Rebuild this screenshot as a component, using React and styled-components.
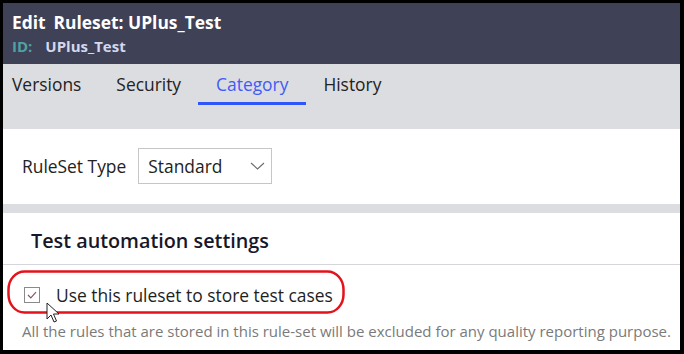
import React from "react";
import styled, { createGlobalStyle } from "styled-components";

const GlobalStyle = createGlobalStyle`
  html, body {
    margin: 0;
    padding: 0;
    background: #000;
  }
  body {
    font-family: "Open Sans", "Liberation Sans", sans-serif;
  }
`;

const Frame = styled.div`
  margin: 3px 4px 4px 3px;
  height: 347px;
  background: #fff;
  display: flex;
  flex-direction: column;
  overflow: hidden;
`;

const Header = styled.header`
  background: #3f4156;
  height: 61px;
  box-sizing: border-box;
  padding: 8px 0 0 9px;
  display: flex;
  flex-direction: column;
`;

const Title = styled.h1`
  margin: 0;
  font-size: 17.4px;
  line-height: 22px;
  font-weight: 700;
  color: #fff;
  display: flex;
  gap: 8px;
`;

const IdLine = styled.div`
  margin-top: 4px;
  font-size: 15px;
  line-height: 18px;
  font-weight: 700;
  display: flex;
  gap: 13px;

  .label {
    color: #4fa2a4;
  }
  .value {
    color: #d3d8ee;
  }
`;

const TabBar = styled.nav`
  background: #dcdde1;
  height: 65px;
  box-sizing: border-box;
  padding: 8px 0 0 9px;
  display: flex;
  align-items: flex-start;
  gap: 35px;
`;

const Tab = styled.div`
  position: relative;
  font-size: 17.4px;
  line-height: 24px;
  padding-bottom: 9px;
  color: ${({ $active }) => ($active ? "#3f5cf5" : "#222")};

  &::after {
    content: "";
    display: ${({ $active }) => ($active ? "block" : "none")};
    position: absolute;
    left: -18px;
    right: -18px;
    bottom: 0;
    height: 3px;
    background: #2d55f7;
  }
`;

const TypeRow = styled.div`
  display: flex;
  align-items: center;
  gap: 12px;
  padding: 19px 0 0 19px;
  height: 36px;
`;

const FieldLabel = styled.span`
  font-size: 17.4px;
  color: #222;
`;

const Select = styled.div`
  width: 134px;
  height: 36px;
  box-sizing: border-box;
  border: 1px solid #c6c6c6;
  display: flex;
  align-items: center;
  justify-content: space-between;
  padding: 0 6px 0 9px;
  font-size: 17.4px;
  color: #222;
  background: #fff;
`;

const Band = styled.div`
  margin-top: 20px;
  height: 9px;
  background: #dcdde1;
`;

const Section = styled.section`
  position: relative;
  flex: 1;
`;

const SectionTitle = styled.h2`
  margin: 0;
  padding: 16px 0 11px 28px;
  font-size: 19.8px;
  line-height: 24px;
  font-weight: 600;
  color: #16182a;
  border-bottom: 1px solid #d4d6db;
`;

const CheckRow = styled.label`
  display: flex;
  align-items: center;
  gap: 16px;
  margin-top: 18px;
  padding-left: 21px;
  height: 24px;
  font-size: 17.4px;
  color: #1e1e1e;
`;

const Box = styled.span`
  width: 16px;
  height: 16px;
  box-sizing: border-box;
  border: 1px solid #8a8a8a;
  background: #fff;
  display: flex;
  align-items: center;
  justify-content: center;
`;

const Description = styled.p`
  margin: 14px 0 0 19px;
  font-size: 15px;
  line-height: 20px;
  color: #7a7a7a;
  white-space: nowrap;
`;

const Annotation = styled.svg`
  position: absolute;
  left: 4px;
  top: 57px;
  pointer-events: none;
`;

const Cursor = styled.svg`
  position: absolute;
  left: 43px;
  top: 89px;
  pointer-events: none;
`;

const tabs = ["Versions", "Security", "Category", "History"];

export default function App() {
  return (
    <>
      <GlobalStyle />
      <Frame>
        <Header>
          <Title>
            <span>Edit</span>
            <span>Ruleset: UPlus_Test</span>
          </Title>
          <IdLine>
            <span className="label">ID:</span>
            <span className="value">UPlus_Test</span>
          </IdLine>
        </Header>

        <TabBar>
          {tabs.map((t) => (
            <Tab key={t} $active={t === "Category"}>
              {t}
            </Tab>
          ))}
        </TabBar>

        <TypeRow>
          <FieldLabel>RuleSet Type</FieldLabel>
          <Select>
            <span>Standard</span>
            <svg width="15" height="8" viewBox="0 0 15 8">
              <path d="M1 1 L7.5 7 L14 1" fill="none" stroke="#6b6b6b" strokeWidth="1.1" />
            </svg>
          </Select>
        </TypeRow>

        <Band />

        <Section>
          <SectionTitle>Test automation settings</SectionTitle>
          <CheckRow>
            <Box>
              <svg width="10" height="8" viewBox="0 0 10 8">
                <path d="M1 4 L3.8 6.8 L9 1.2" fill="none" stroke="#8a5468" strokeWidth="1.2" />
              </svg>
            </Box>
            <span>Use this ruleset to store test cases</span>
          </CheckRow>
          <Description>
            All the rules that are stored in this rule-set will be excluded for any quality reporting purpose.
          </Description>

          <Annotation width="340" height="46" viewBox="0 0 340 46">
            <rect x="1.5" y="1.5" width="335" height="41" rx="16" ry="18" fill="none" stroke="#e3121b" strokeWidth="2.5" />
          </Annotation>

          <Cursor width="14" height="22" viewBox="0 0 14 22">
            <path d="M1 1 L1 17 L5 13 L8 20 L10.5 19 L7.5 12 L13 12 Z" fill="#fff" stroke="#222" strokeWidth="1" strokeLinejoin="round" />
          </Cursor>
        </Section>
      </Frame>
    </>
  );
}
